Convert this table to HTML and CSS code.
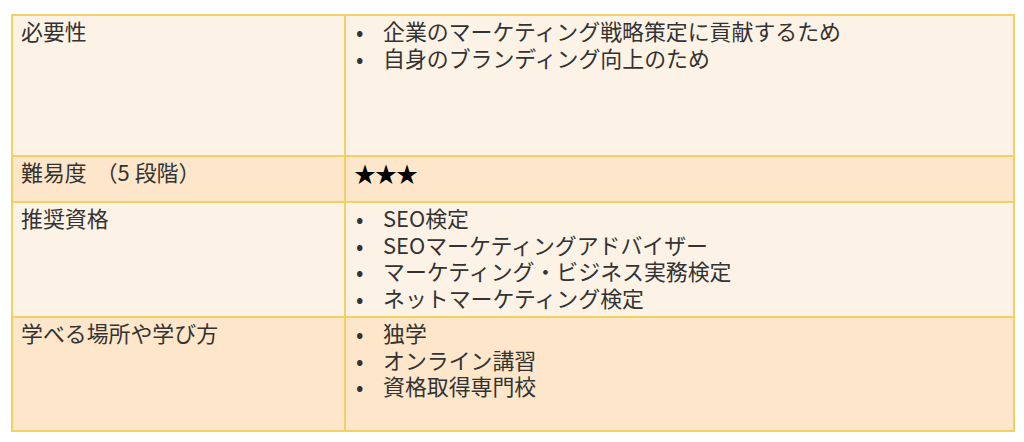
FILE: index.html
```html
<!DOCTYPE html>
<html lang="ja">
<head>
<meta charset="utf-8">
<link rel="stylesheet" href="styles.css">
</head>
<body>
<div class="page">
<table class="info">
  <tr class="light r1">
    <th>必要性</th>
    <td><ul><li>企業のマーケティング戦略策定に貢献するため</li><li>自身のブランディング向上のため</li></ul></td>
  </tr>
  <tr class="dark r2">
    <th>難易度<span class="paren">（</span>5 段階）</th>
    <td><span class="stars">★★★</span></td>
  </tr>
  <tr class="light r3">
    <th>推奨資格</th>
    <td><ul><li>SEO検定</li><li>SEOマーケティングアドバイザー</li><li>マーケティング・ビジネス実務検定</li><li>ネットマーケティング検定</li></ul></td>
  </tr>
  <tr class="dark r4">
    <th>学べる場所や学び方</th>
    <td><ul><li>独学</li><li>オンライン講習</li><li>資格取得専門校</li></ul></td>
  </tr>
</table>
</div>
</body>
</html>
```
FILE: styles.css
```css
html, body { margin: 0; padding: 0; background: #fff; }
.page { padding: 14px 9px 0 11px; }
.info {
  width: 1004px;
  border-collapse: collapse;
  font-family: "Noto Sans CJK JP", "Noto Sans", sans-serif;
  font-size: 21.9px;
  line-height: 26.7px;
  color: #333;
  table-layout: fixed;
}
.info th, .info td {
  border: 2px solid #f3d066;
  vertical-align: top;
  text-align: left;
  font-weight: normal;
  padding: 2px 8px;
}
.info th { width: 315px; }
.paren { margin-left: 9px; }
.light { background: #fdf2e6; }
.dark { background: #fde6c9; }
.r1 { height: 141px; }
.r2 { height: 46px; }
.r3 { height: 115px; }
.r4 { height: 114px; }
.info ul { list-style: none; margin: 0; padding: 0; }
.info li { position: relative; padding-left: 29px; }
.info li::before { content: "•"; position: absolute; left: 2px; top: 0; }
.stars { font-size: 22px; letter-spacing: -1px; color: #000; }
```
